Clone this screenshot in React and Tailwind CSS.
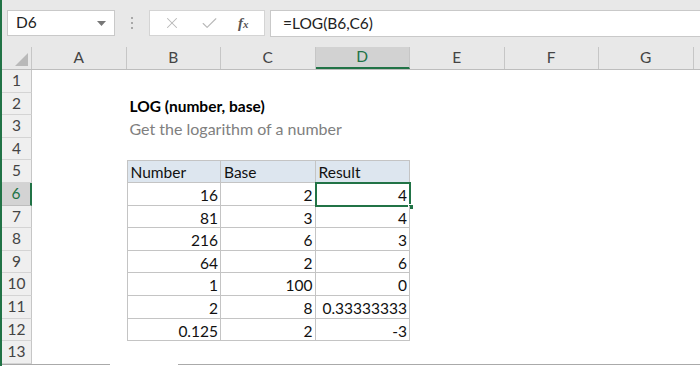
import { X, Check } from "lucide-react";

const cols = ["A", "B", "C", "D", "E", "F", "G"];

const data = [
  ["16", "2", "4"],
  ["81", "3", "4"],
  ["216", "6", "3"],
  ["64", "2", "6"],
  ["1", "100", "0"],
  ["2", "8", "0.33333333"],
  ["0.125", "2", "-3"],
];

function Cell({ children, className = "" }) {
  return (
    <div className={`w-[94.5px] h-full shrink-0 flex items-end pb-[1px] ${className}`}>
      {children}
    </div>
  );
}

function tableCell(text, align, extra = "") {
  return (
    <div
      className={`w-[94.5px] h-full shrink-0 flex items-end pb-[1px] border-r border-b border-[#c4c4c4] ${
        align === "right" ? "justify-end pr-[2px]" : "pl-[3px]"
      } ${extra}`}
    >
      {text}
    </div>
  );
}

export default function App() {
  const rows = [];

  for (let r = 1; r <= 13; r++) {
    let content = null;

    if (r === 2) {
      content = (
        <>
          <Cell />
          <Cell className="pl-[3px] font-bold text-black whitespace-nowrap overflow-visible">
            LOG (number, base)
          </Cell>
        </>
      );
    } else if (r === 3) {
      content = (
        <>
          <Cell />
          <Cell className="pl-[3px] text-[#808080] text-[16px] whitespace-nowrap overflow-visible">
            Get the logarithm of a number
          </Cell>
        </>
      );
    } else if (r === 5) {
      content = (
        <>
          <Cell />
          {tableCell("Number", "left", "bg-[#dde6ef] border-l border-t")}
          {tableCell("Base", "left", "bg-[#dde6ef] border-t")}
          {tableCell("Result", "left", "bg-[#dde6ef] border-t")}
        </>
      );
    } else if (r >= 6 && r <= 12) {
      const d = data[r - 6];
      content = (
        <>
          <Cell />
          {tableCell(d[0], "right", "border-l")}
          {tableCell(d[1], "right")}
          <div className="relative w-[94.5px] h-full shrink-0">
            {tableCell(d[2], "right")}
            {r === 6 && (
              <>
                <div className="absolute left-[-1px] top-[-1px] right-[-1px] bottom-[-1px] border-2 border-[#217346]" />
                <div className="absolute right-[-4px] bottom-[-4px] w-[6px] h-[6px] bg-[#217346] border border-white" />
              </>
            )}
          </div>
        </>
      );
    }

    rows.push(
      <div key={r} className="flex h-[22.6px]">
        <div
          className={`w-[30px] shrink-0 h-full flex items-center justify-center border-b border-r ${
            r === 6
              ? "bg-[#d3d3d3] text-[#217346] border-r-2 border-r-[#217346] border-b-[#bdbdbd]"
              : "bg-[#efefef] text-[#444444] border-b-[#d4d4d4] border-r-[#c6c6c6]"
          }`}
        >
          {r}
        </div>
        {content}
      </div>
    );
  }

  return (
    <div
      className="w-[700px] h-[366px] overflow-hidden bg-white border-l-2 border-[#217346] text-[15.5px] text-[#111] leading-none flex flex-col"
      style={{ fontFamily: "Lato, 'Open Sans', sans-serif" }}
    >
      {/* Formula bar */}
      <div className="h-[47px] shrink-0 bg-[#e8e8e8] flex items-start pt-[10px] pl-[5px]">
        <div className="w-[108px] h-[26px] bg-white border border-[#c9c9c9] flex items-center justify-between pl-[8px] pr-[8px]">
          <span className="text-[#222]">D6</span>
          <svg width="9" height="5" viewBox="0 0 9 5">
            <path d="M0 0 L9 0 L4.5 5 Z" fill="#777" />
          </svg>
        </div>
        <div className="w-[34px] h-[26px] flex flex-col items-center justify-center gap-[3px]">
          <span className="w-[2px] h-[2px] bg-[#a8a8a8]" />
          <span className="w-[2px] h-[2px] bg-[#a8a8a8]" />
          <span className="w-[2px] h-[2px] bg-[#a8a8a8]" />
        </div>
        <div className="w-[116px] h-[26px] bg-white border border-[#d4d4d4] flex items-center pl-[13px]">
          <X size={18} strokeWidth={1.4} className="text-[#b8b8b8]" />
          <Check size={19} strokeWidth={1.4} className="text-[#b8b8b8] ml-[19px]" />
          <span
            className="ml-[19px] italic font-bold text-[#555] text-[15px]"
            style={{ fontFamily: "'Liberation Serif', serif" }}
          >
            f<span className="text-[11px]">x</span>
          </span>
        </div>
        <div className="ml-[5px] flex-1 h-[27px] bg-white border border-[#c9c9c9] border-r-0 flex items-center pl-[12px] text-[#222]">
          =LOG(B6,C6)
        </div>
      </div>

      {/* Column headers */}
      <div className="flex h-[23px] shrink-0 bg-[#e8e8e8] border-b border-[#bdbdbd]">
        <div className="w-[30px] shrink-0 h-full relative border-r border-[#c6c6c6]">
          <svg className="absolute right-[3px] bottom-[3px]" width="13" height="13" viewBox="0 0 13 13">
            <path d="M13 0 L13 13 L0 13 Z" fill="#b9b9b9" />
          </svg>
        </div>
        {cols.map((c) => (
          <div
            key={c}
            className={`w-[94.5px] shrink-0 h-full flex items-center justify-center border-r border-[#c6c6c6] ${
              c === "D"
                ? "bg-[#d2d2d2] text-[#217346] border-b-2 border-b-[#217346]"
                : "text-[#444]"
            }`}
          >
            {c}
          </div>
        ))}
      </div>

      {/* Grid */}
      <div className="flex flex-col shrink-0">{rows}</div>

      {/* Sheet tab strip */}
      <div className="flex-1 flex">
        <div className="w-[108px] border-t border-[#aaaaaa]" />
        <div className="w-[68px]" />
        <div className="flex-1 border-t border-[#aaaaaa]" />
      </div>
    </div>
  );
}
